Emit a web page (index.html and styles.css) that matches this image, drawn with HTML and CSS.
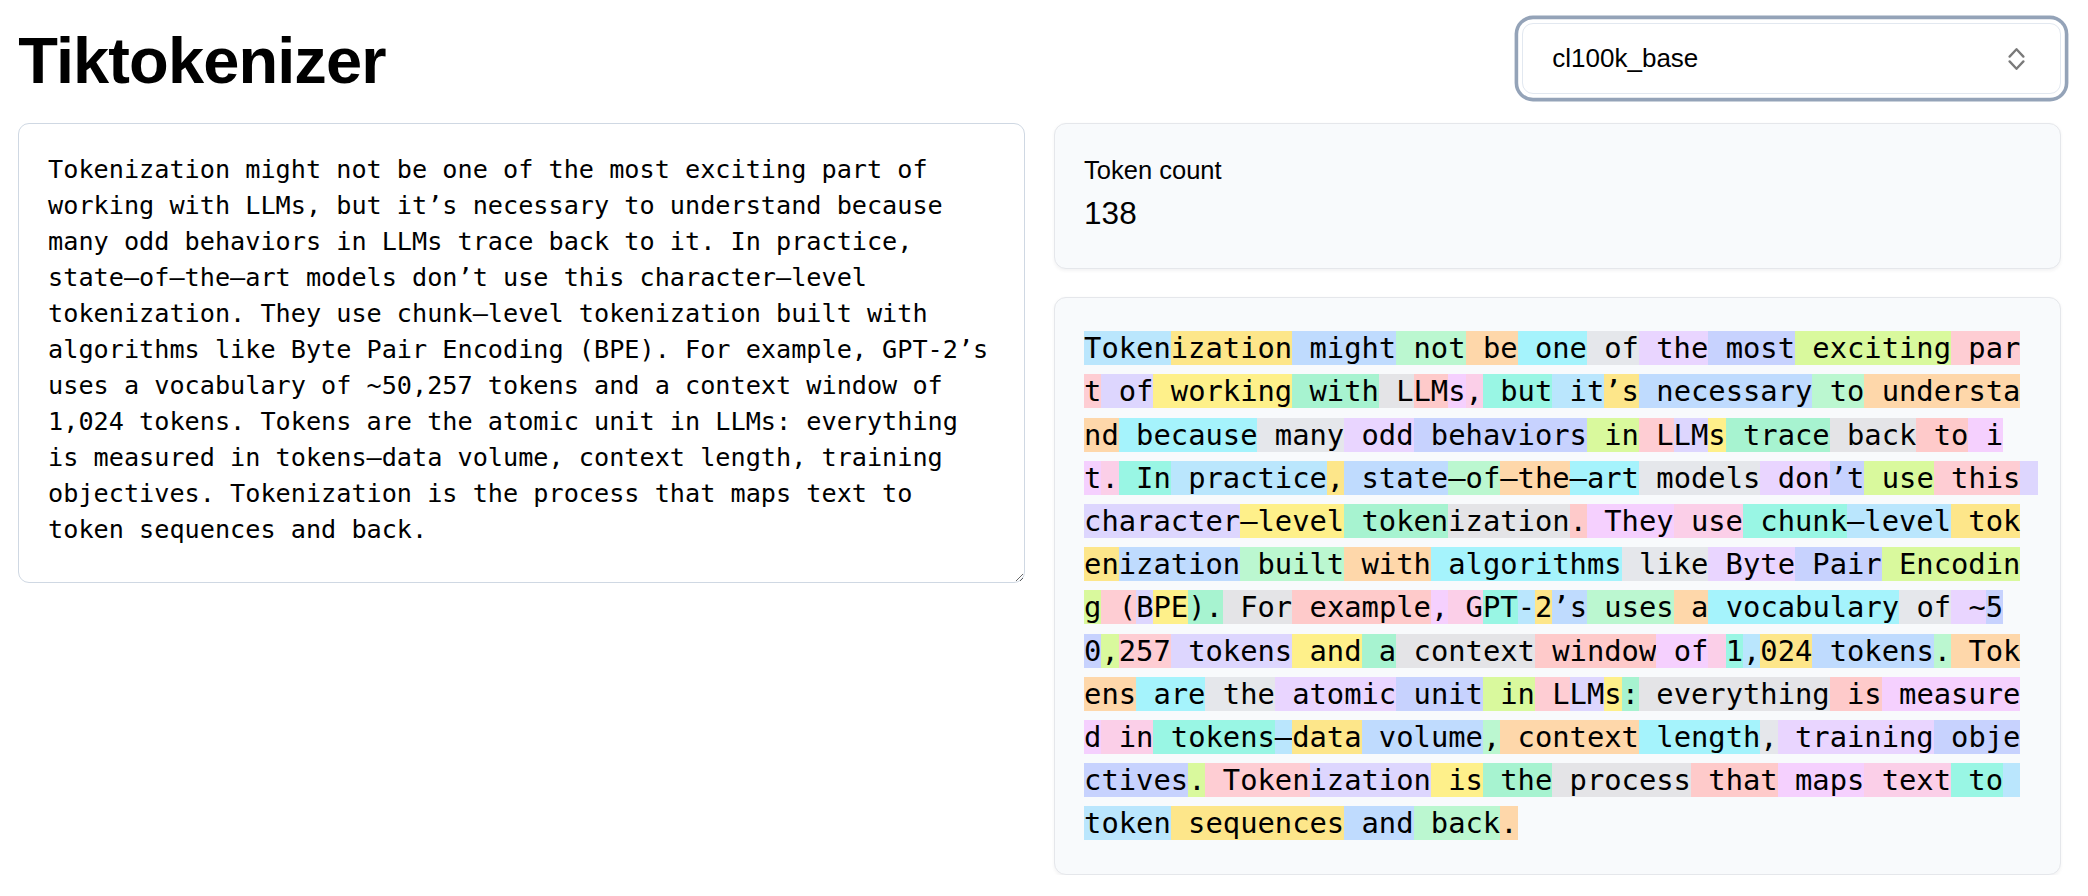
FILE: index.html
```html
<!DOCTYPE html>
<html lang="en">
<head>
<meta charset="utf-8">
<title>Tiktokenizer</title>
<link rel="stylesheet" href="styles.css">
</head>
<body>
<div class="page">
  <header class="header">
    <h1 class="title">Tiktokenizer</h1>
    <div class="select">
      <span class="select-value">cl100k_base</span>
      <svg class="chevrons" width="17" height="24" viewBox="0 0 17 24" aria-hidden="true">
        <path d="M1.6 9.6 L8.5 2.2 L15.4 9.6" fill="none" stroke="#7a7a7a" stroke-width="2.3" stroke-linecap="round" stroke-linejoin="round"/>
        <path d="M1.6 14.4 L8.5 21.8 L15.4 14.4" fill="none" stroke="#7a7a7a" stroke-width="2.3" stroke-linecap="round" stroke-linejoin="round"/>
      </svg>
    </div>
  </header>
  <main class="grid">
    <textarea class="input" spellcheck="false">Tokenization might not be one of the most exciting part of working with LLMs, but it’s necessary to understand because many odd behaviors in LLMs trace back to it. In practice, state–of–the–art models don’t use this character–level tokenization. They use chunk–level tokenization built with algorithms like Byte Pair Encoding (BPE). For example, GPT-2’s uses a vocabulary of ~50,257 tokens and a context window of 1,024 tokens. Tokens are the atomic unit in LLMs: everything is measured in tokens–data volume, context length, training objectives. Tokenization is the process that maps text to token sequences and back.</textarea>
    <section class="side">
      <div class="panel count">
        <div class="count-label">Token count</div>
        <div class="count-value">138</div>
      </div>
      <div class="panel tokens"><span class="c0">Token</span
><span class="c1">ization</span
><span class="c2"> might</span
><span class="c3"> not</span
><span class="c4"> be</span
><span class="c5"> one</span
><span class="c6"> of</span
><span class="c7"> the</span
><span class="c8"> most</span
><span class="c9"> exciting</span
><span class="c10"> part</span
><span class="c11"> of</span
><span class="c12"> working</span
><span class="c13"> with</span
><span class="c14"> L</span
><span class="c15">LM</span
><span class="c16">s</span
><span class="c17">,</span
><span class="c18"> but</span
><span class="c0"> it</span
><span class="c1">’s</span
><span class="c2"> necessary</span
><span class="c3"> to</span
><span class="c4"> understand</span
><span class="c5"> because</span
><span class="c6"> many</span
><span class="c7"> odd</span
><span class="c8"> behaviors</span
><span class="c9"> in</span
><span class="c10"> L</span
><span class="c11">LM</span
><span class="c12">s</span
><span class="c13"> trace</span
><span class="c14"> back</span
><span class="c15"> to</span
><span class="c16"> it</span
><span class="c17">.</span
><span class="c18"> In</span
><span class="c0"> practice</span
><span class="c1">,</span
><span class="c2"> state</span
><span class="c3">–of</span
><span class="c4">–the</span
><span class="c5">–art</span
><span class="c6"> models</span
><span class="c7"> don</span
><span class="c8">’t</span
><span class="c9"> use</span
><span class="c10"> this</span
><span class="c11"> character</span
><span class="c12">–level</span
><span class="c13"> token</span
><span class="c14">ization</span
><span class="c15">.</span
><span class="c16"> They</span
><span class="c17"> use</span
><span class="c18"> chunk</span
><span class="c0">–level</span
><span class="c1"> token</span
><span class="c2">ization</span
><span class="c3"> built</span
><span class="c4"> with</span
><span class="c5"> algorithms</span
><span class="c6"> like</span
><span class="c7"> Byte</span
><span class="c8"> Pair</span
><span class="c9"> Encoding</span
><span class="c10"> (</span
><span class="c11">B</span
><span class="c12">PE</span
><span class="c13">).</span
><span class="c14"> For</span
><span class="c15"> example</span
><span class="c16">,</span
><span class="c17"> G</span
><span class="c18">PT</span
><span class="c0">-</span
><span class="c1">2</span
><span class="c2">’s</span
><span class="c3"> uses</span
><span class="c4"> a</span
><span class="c5"> vocabulary</span
><span class="c6"> of</span
><span class="c7"> ~</span
><span class="c8">50</span
><span class="c9">,</span
><span class="c10">257</span
><span class="c11"> tokens</span
><span class="c12"> and</span
><span class="c13"> a</span
><span class="c14"> context</span
><span class="c15"> window</span
><span class="c16"> of</span
><span class="c17"> </span
><span class="c18">1</span
><span class="c0">,</span
><span class="c1">024</span
><span class="c2"> tokens</span
><span class="c3">.</span
><span class="c4"> Tokens</span
><span class="c5"> are</span
><span class="c6"> the</span
><span class="c7"> atomic</span
><span class="c8"> unit</span
><span class="c9"> in</span
><span class="c10"> L</span
><span class="c11">LM</span
><span class="c12">s</span
><span class="c13">:</span
><span class="c14"> everything</span
><span class="c15"> is</span
><span class="c16"> measured</span
><span class="c17"> in</span
><span class="c18"> tokens</span
><span class="c0">–</span
><span class="c1">data</span
><span class="c2"> volume</span
><span class="c3">,</span
><span class="c4"> context</span
><span class="c5"> length</span
><span class="c6">,</span
><span class="c7"> training</span
><span class="c8"> objectives</span
><span class="c9">.</span
><span class="c10"> Token</span
><span class="c11">ization</span
><span class="c12"> is</span
><span class="c13"> the</span
><span class="c14"> process</span
><span class="c15"> that</span
><span class="c16"> maps</span
><span class="c17"> text</span
><span class="c18"> to</span
><span class="c0"> token</span
><span class="c1"> sequences</span
><span class="c2"> and</span
><span class="c3"> back</span
><span class="c4">.</span
></div>
    </section>
  </main>
</div>
</body>
</html>
```

FILE: styles.css
```css
* {
  box-sizing: border-box;
}

html, body {
  margin: 0;
  padding: 0;
  background: #ffffff;
}

body {
  font-family: "Liberation Sans", Arial, sans-serif;
  color: #000000;
}

.page {
  padding: 20.5px 26.7px 0 18.3px;
}

.header {
  display: flex;
  align-items: center;
  justify-content: space-between;
  height: 76px;
}

.title {
  margin: 0;
  padding-top: 4px;
  font-family: "Liberation Sans", Arial, sans-serif;
  font-weight: 700;
  font-size: 65px;
  line-height: 72px;
  letter-spacing: -0.9px;
  color: #000000;
}

.select {
  display: flex;
  align-items: center;
  justify-content: space-between;
  width: 539px;
  height: 71px;
  padding: 0 35px 0 29px;
  border: 1px solid #e2e8f0;
  border-radius: 11px;
  background: #ffffff;
  box-shadow: 0 0 0 3.8px #ffffff, 0 0 0 7.4px #94a3b8;
}

.select-value {
  font-size: 26px;
  color: #000000;
}

.chevrons {
  display: block;
  flex: none;
}

.grid {
  display: grid;
  grid-template-columns: 1fr 1fr;
  gap: 29px;
  align-items: start;
  margin-top: 26px;
}

.input {
  display: block;
  width: 100%;
  height: 460px;
  margin: 0;
  padding: 28.8px;
  border: 1px solid #cfd8e3;
  border-radius: 11px;
  background: #ffffff;
  color: #000000;
  font-family: "DejaVu Sans Mono", "Liberation Mono", monospace;
  font-size: 25.2px;
  line-height: 36px;
  outline: none;
  overflow: hidden;
}

.side {
  display: flex;
  flex-direction: column;
  gap: 28.8px;
}

.panel {
  background: #f8fafc;
  border: 1px solid #e5e7eb;
  border-radius: 12px;
  padding: 28.8px;
  box-shadow: 0 1.8px 3.6px rgba(15, 23, 42, 0.05);
}

.count-label {
  font-size: 25.5px;
  line-height: 36px;
}

.count-value {
  font-size: 31.5px;
  line-height: 50.4px;
}

.tokens {
  font-family: "DejaVu Sans Mono", "Liberation Mono", monospace;
  font-size: 28.8px;
  line-height: 43.2px;
  white-space: pre-wrap;
  word-break: break-all;
  color: #000000;
}

.c0 { background: #bae6fd; }
.c1 { background: #fde68a; }
.c2 { background: #bfdbfe; }
.c3 { background: #bbf7d0; }
.c4 { background: #fed7aa; }
.c5 { background: #a5f3fc; }
.c6 { background: #e5e7eb; }
.c7 { background: #e9d5ff; }
.c8 { background: #c7d2fe; }
.c9 { background: #d9f99d; }
.c10 { background: #fecdd3; }
.c11 { background: #ddd6fe; }
.c12 { background: #fef08a; }
.c13 { background: #a7f3d0; }
.c14 { background: #e4e4e7; }
.c15 { background: #fecaca; }
.c16 { background: #f5d0fe; }
.c17 { background: #fbcfe8; }
.c18 { background: #99f6e4; }
```
